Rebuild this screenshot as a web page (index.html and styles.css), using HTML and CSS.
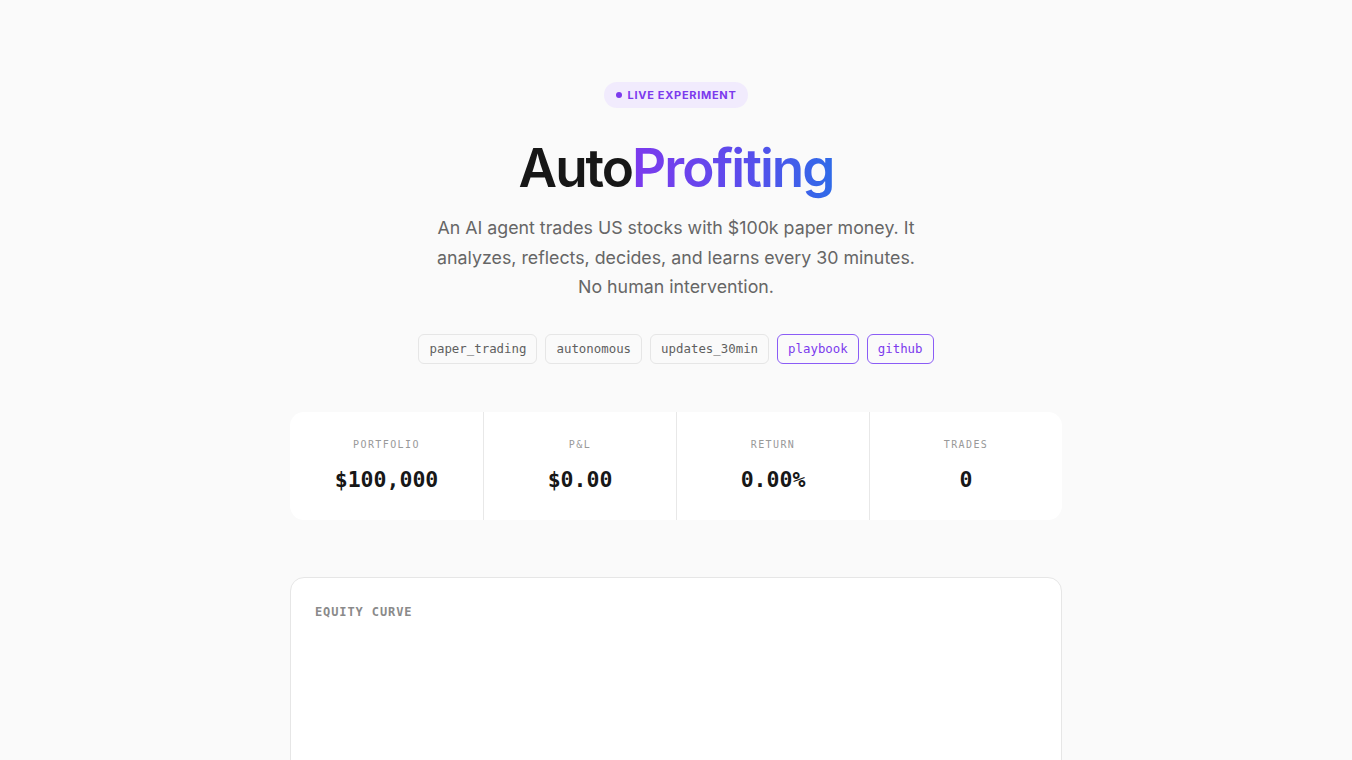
FILE: index.html
```html
<!DOCTYPE html>
<html lang="en">
<head>
<meta charset="utf-8">
<title>AutoProfiting</title>
<link rel="stylesheet" href="styles.css">
</head>
<body>
<main class="page">
  <header class="hero">
    <div class="badge"><span class="dot"></span>LIVE EXPERIMENT</div>
    <h1 class="title">Auto<span class="grad">Profiting</span></h1>
    <p class="lead">An AI agent trades US stocks with $100k paper money. It analyzes, reflects, decides, and learns every 30 minutes. No human intervention.</p>
    <div class="tags">
      <span class="tag">paper_trading</span>
      <span class="tag">autonomous</span>
      <span class="tag">updates_30min</span>
      <a class="tag tag-link" href="#">playbook</a>
      <a class="tag tag-link" href="#">github</a>
    </div>
  </header>

  <section class="stats">
    <div class="stat"><div class="stat-label">PORTFOLIO</div><div class="stat-value">$100,000</div></div>
    <div class="stat"><div class="stat-label">P&amp;L</div><div class="stat-value">$0.00</div></div>
    <div class="stat"><div class="stat-label">RETURN</div><div class="stat-value">0.00%</div></div>
    <div class="stat"><div class="stat-label">TRADES</div><div class="stat-value">0</div></div>
  </section>

  <section class="panel">
    <h2 class="panel-title">EQUITY CURVE</h2>
  </section>
</main>
</body>
</html>
```

FILE: styles.css
```css
* { box-sizing: border-box; }
html, body { margin: 0; padding: 0; }
body {
  background: #fafafa;
  color: #171717;
  font-family: Inter, "Noto Sans", sans-serif;
}
.page {
  width: 772px;
  margin: 0 auto;
  padding-top: 82px;
}
.hero {
  display: flex;
  flex-direction: column;
  align-items: center;
}
.badge {
  display: inline-flex;
  align-items: center;
  gap: 6px;
  height: 26px;
  padding: 0 12px;
  border-radius: 13px;
  background: #f1ebfd;
  color: #7c3aed;
  font-size: 11px;
  font-weight: 700;
  letter-spacing: 0.7px;
}
.dot {
  width: 6px;
  height: 6px;
  border-radius: 50%;
  background: #7c3aed;
}
.title {
  margin: 28px 0 0;
  font-size: 53px;
  line-height: 64px;
  font-weight: 600;
  letter-spacing: -2px;
  color: #171717;
}
.grad {
  background: linear-gradient(90deg, #7c3aed 0%, #5b4cec 55%, #2f6be8 100%);
  -webkit-background-clip: text;
  background-clip: text;
  color: transparent;
}
.lead {
  margin: 13px 0 0;
  width: 500px;
  text-align: center;
  font-size: 17.8px;
  line-height: 29.5px;
  color: #666;
}
.tags {
  display: flex;
  gap: 8px;
  margin-top: 32px;
}
.tag {
  display: inline-flex;
  align-items: center;
  height: 30px;
  padding: 0 10px;
  border: 1px solid #e6e6e6;
  border-radius: 6px;
  background: #fafafa;
  color: #5f5f5f;
  font-family: "DejaVu Sans Mono", "Liberation Mono", monospace;
  font-size: 12.4px;
  text-decoration: none;
}
.tag-link {
  border-color: #8b5cf6;
  color: #7c3aed;
}
.stats {
  display: grid;
  grid-template-columns: repeat(4, 1fr);
  margin-top: 48px;
  background: #fff;
  border-radius: 14px;
  overflow: hidden;
}
.stat {
  height: 108px;
  display: flex;
  flex-direction: column;
  align-items: center;
  padding-top: 26px;
  border-left: 1px solid #e8e8e8;
}
.stat:first-child { border-left: none; }
.stat-label {
  font-family: "DejaVu Sans Mono", "Liberation Mono", monospace;
  font-size: 10px;
  letter-spacing: 1.4px;
  color: #999;
  line-height: 14px;
}
.stat-value {
  margin-top: 13px;
  font-family: "DejaVu Sans Mono", "Liberation Mono", monospace;
  font-size: 21.5px;
  font-weight: 700;
  color: #171717;
  line-height: 30px;
}
.panel {
  margin-top: 57px;
  height: 240px;
  background: #fff;
  border: 1px solid #e6e6e6;
  border-radius: 14px;
  padding: 26px 24px;
}
.panel-title {
  margin: 0;
  font-family: "DejaVu Sans Mono", "Liberation Mono", monospace;
  font-size: 12px;
  font-weight: 700;
  letter-spacing: 0.9px;
  color: #8a8a8a;
  line-height: 16px;
}
```
